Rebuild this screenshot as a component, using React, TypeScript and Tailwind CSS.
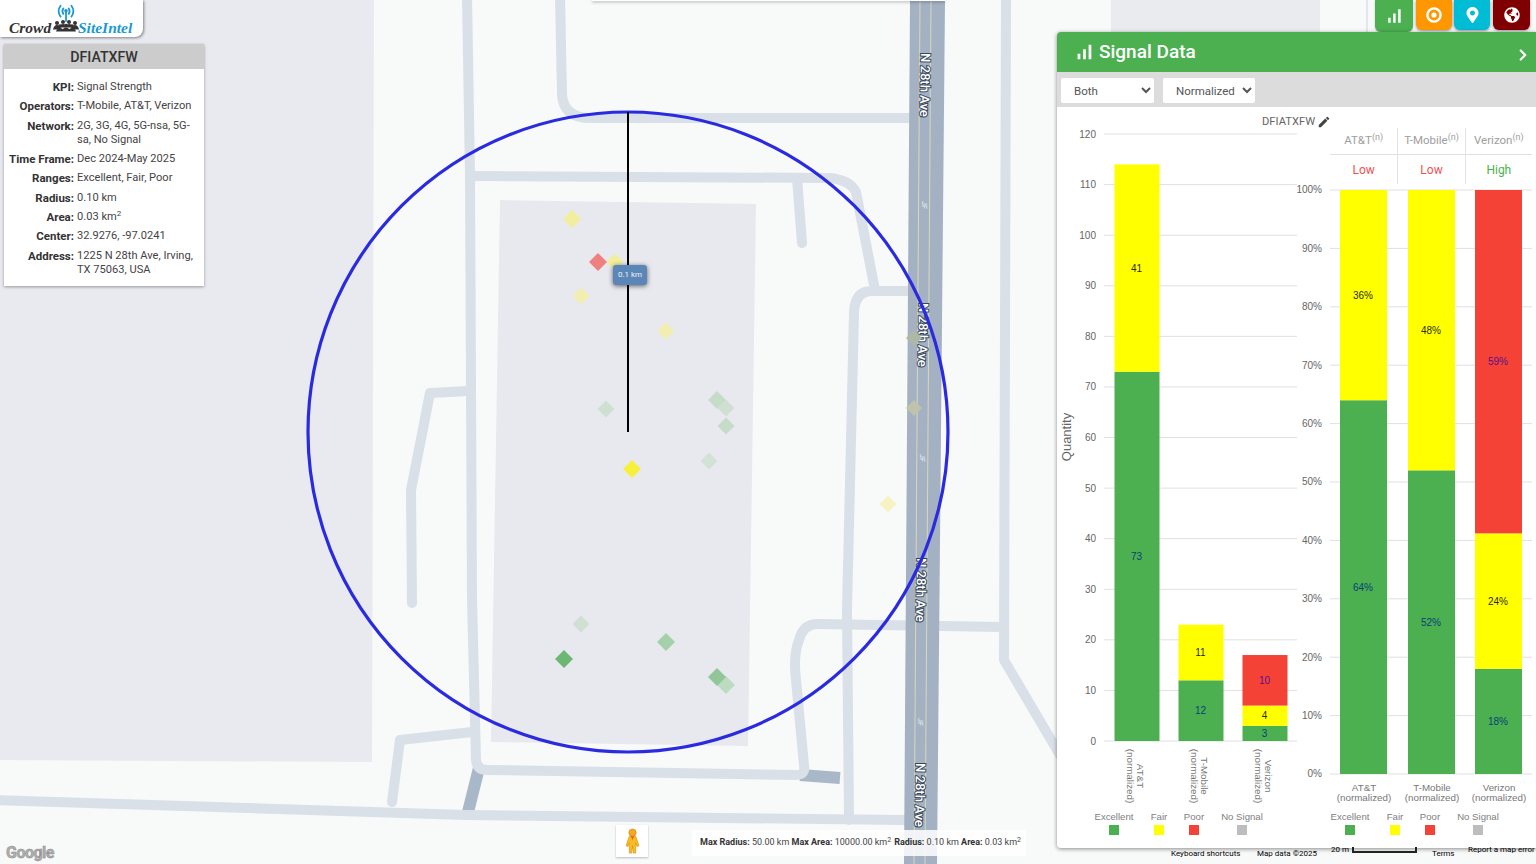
import React from 'react';
import { ChevronRight } from 'lucide-react';
import { FaGlobeAmericas, FaMapMarkerAlt } from 'react-icons/fa';
import { MdEdit, MdSignalCellularAlt } from 'react-icons/md';

const GREEN = '#4caf50';
const YELLOW = '#ffff00';
const RED = '#f44336';

const labelInk: Record<string, string> = {
  [GREEN]: '#0a3f78',
  [YELLOW]: '#2a2a18',
  [RED]: '#5b0f8c',
};

type Seg = { from: number; to: number; color: string; label: string };
type Bar = { x: number; segs: Seg[] };

const countBars: Bar[] = [
  { x: 1114.5, segs: [{ from: 0, to: 73, color: GREEN, label: '73' }, { from: 73, to: 114, color: YELLOW, label: '41' }] },
  { x: 1178.5, segs: [{ from: 0, to: 12, color: GREEN, label: '12' }, { from: 12, to: 23, color: YELLOW, label: '11' }] },
  {
    x: 1242.5,
    segs: [
      { from: 0, to: 3, color: GREEN, label: '3' },
      { from: 3, to: 7, color: YELLOW, label: '4' },
      { from: 7, to: 17, color: RED, label: '10' },
    ],
  },
];

const pctBars: Bar[] = [
  { x: 1340, segs: [{ from: 0, to: 64, color: GREEN, label: '64%' }, { from: 64, to: 100, color: YELLOW, label: '36%' }] },
  { x: 1408, segs: [{ from: 0, to: 52, color: GREEN, label: '52%' }, { from: 52, to: 100, color: YELLOW, label: '48%' }] },
  {
    x: 1475,
    segs: [
      { from: 0, to: 18, color: GREEN, label: '18%' },
      { from: 18, to: 41.2, color: YELLOW, label: '24%' },
      { from: 41.2, to: 100, color: RED, label: '59%' },
    ],
  },
];

const chartFont = { fontFamily: '"Liberation Sans", Arial, sans-serif' };

const Legend = ({ items }: { items: { x: number; name: string; color: string }[] }) => (
  <g>
    {items.map((i) => (
      <g key={i.name}>
        <text x={i.x} y={819.5} textAnchor="middle" fontSize="9.6" fill="#808080">
          {i.name}
        </text>
        <rect x={i.x - 5} y={825} width="10" height="10" fill={i.color} />
      </g>
    ))}
  </g>
);

const CountChart = () => {
  const y = (v: number) => 741 - v * 5.058;
  const ticks = [0, 10, 20, 30, 40, 50, 60, 70, 80, 90, 100, 110, 120];
  const names = ['AT&T', 'T-Mobile', 'Verizon'];
  return (
    <svg viewBox="1057 128 240 720" className="w-[240px] h-[720px] shrink-0 overflow-visible" style={chartFont}>
      <text transform="translate(1071 437) rotate(-90)" textAnchor="middle" fontSize="13" fill="#666">
        Quantity
      </text>
      {ticks.map((t) => (
        <g key={t}>
          <line x1="1104" x2="1297" y1={y(t)} y2={y(t)} stroke="#e0e0e0" strokeWidth="1" />
          <text x="1096" y={y(t) + 3.5} textAnchor="end" fontSize="10" fill="#666">
            {t}
          </text>
        </g>
      ))}
      {countBars.map((b) =>
        b.segs.map((s) => (
          <g key={b.x + s.label}>
            <rect x={b.x} y={y(s.to)} width="45" height={y(s.from) - y(s.to)} fill={s.color} />
            <text x={b.x + 22} y={(y(s.from) + y(s.to)) / 2 + 3.5} textAnchor="middle" fontSize="10" fill={labelInk[s.color]}>
              {s.label}
            </text>
          </g>
        )),
      )}
      {names.map((n, i) => (
        <g key={n} fill="#777" fontSize="9.8">
          <text transform={`translate(${1137 + i * 64} 776) rotate(90)`} textAnchor="middle">
            {n}
          </text>
          <text transform={`translate(${1127 + i * 64} 776) rotate(90)`} textAnchor="middle">
            (normalized)
          </text>
        </g>
      ))}
      <Legend
        items={[
          { x: 1114, name: 'Excellent', color: GREEN },
          { x: 1159, name: 'Fair', color: YELLOW },
          { x: 1194, name: 'Poor', color: RED },
          { x: 1242, name: 'No Signal', color: '#bdbdbd' },
        ]}
      />
    </svg>
  );
};

const PctChart = () => {
  const y = (v: number) => 774 - v * 5.84;
  const ticks = [0, 10, 20, 30, 40, 50, 60, 70, 80, 90, 100];
  const names = [
    { n: 'AT&T', x: 1364 },
    { n: 'T-Mobile', x: 1432 },
    { n: 'Verizon', x: 1499 },
  ];
  return (
    <svg viewBox="1297 184 239 664" className="w-[239px] h-[664px] shrink-0 overflow-visible" style={chartFont}>
      {ticks.map((t) => (
        <g key={t}>
          <line x1="1330" x2="1532" y1={y(t)} y2={y(t)} stroke="#e0e0e0" strokeWidth="1" />
          <text x="1322" y={y(t) + 3.3} textAnchor="end" fontSize="10" fill="#666">
            {t}%
          </text>
        </g>
      ))}
      {pctBars.map((b) =>
        b.segs.map((s) => (
          <g key={b.x + s.label}>
            <rect x={b.x} y={y(s.to)} width="47" height={y(s.from) - y(s.to)} fill={s.color} />
            <text x={b.x + 23} y={(y(s.from) + y(s.to)) / 2 + 3.5} textAnchor="middle" fontSize="10" fill={labelInk[s.color]}>
              {s.label}
            </text>
          </g>
        )),
      )}
      {names.map((l) => (
        <g key={l.n} fill="#777" fontSize="9.8" textAnchor="middle">
          <text x={l.x} y={791}>
            {l.n}
          </text>
          <text x={l.x} y={801}>
            (normalized)
          </text>
        </g>
      ))}
      <Legend
        items={[
          { x: 1350, name: 'Excellent', color: GREEN },
          { x: 1395, name: 'Fair', color: YELLOW },
          { x: 1430, name: 'Poor', color: RED },
          { x: 1478, name: 'No Signal', color: '#bdbdbd' },
        ]}
      />
    </svg>
  );
};

const operators = [
  { name: 'AT&T', level: 'Low', color: 'text-[#ef5350]' },
  { name: 'T-Mobile', level: 'Low', color: 'text-[#ef5350]' },
  { name: 'Verizon', level: 'High', color: 'text-[#4caf50]' },
];

const SignalPanel = () => (
  <div className="absolute left-[1057px] top-[32px] w-[479px] h-[816px] flex flex-col bg-white rounded-l-[4px] overflow-hidden shadow-[0_1px_4px_rgba(0,0,0,0.45)] font-['Roboto',sans-serif]">
    <div className="h-[40px] shrink-0 bg-[#4caf50] text-white flex items-center pl-[16px] pr-[4px]">
      <MdSignalCellularAlt className="w-[22px] h-[22px] -mt-[1px]" />
      <span className="ml-[4px] text-[19px] font-medium mt-[1px]">Signal Data</span>
      <ChevronRight className="ml-auto w-[18px] h-[18px] mt-[5px]" strokeWidth={3} />
    </div>
    <div className="h-[35px] shrink-0 bg-[#dcdcdc] flex items-start pt-[6px] pl-[4px] gap-[9px]">
      <select className="w-[93px] h-[25px] bg-white rounded-[2px] pl-[9px] text-[11.5px] text-[#555]">
        <option>Both</option>
      </select>
      <select className="w-[92px] h-[25px] bg-white rounded-[2px] pl-[9px] text-[11.5px] text-[#555]">
        <option>Normalized</option>
      </select>
    </div>
    <div className="h-[21px] shrink-0 flex items-center pt-[10px] pl-[205px] text-[11.2px] text-[#666]">
      <span>DFIATXFW</span>
      <MdEdit className="w-[14px] h-[14px] ml-[2px] -mt-[2px] text-[#444]" />
    </div>
    <div className="flex-1 flex">
      <CountChart />
      <div className="flex flex-col">
        <div className="ml-[33px] w-[202px] h-[56px] grid grid-cols-3 text-[12px] text-center">
          {operators.map((o, i) => (
            <div key={o.name} className={`flex flex-col ${i > 0 ? 'border-l border-[#e3e3e3]' : ''}`}>
              <div className="h-[27px] flex items-center justify-center text-[11.5px] text-[#9e9e9e] border-b border-[#e0e0e0]">
                <span>
                  {o.name}
                  <sup className="text-[9px] -top-[4px]">(n)</sup>
                </span>
              </div>
              <div className={`h-[29px] flex items-center justify-center ${o.color}`}>{o.level}</div>
            </div>
          ))}
        </div>
        <PctChart />
      </div>
    </div>
  </div>
);

const diamonds = [
  { x: 572, y: 219, c: '#f1ee9c', s: 9 },
  { x: 581, y: 296, c: '#f1eeb0', s: 8.5 },
  { x: 666, y: 331, c: '#f1eeb0', s: 8.5 },
  { x: 615, y: 262, c: '#f1ee9c', s: 8.5 },
  { x: 888, y: 504, c: '#f5f2c4', s: 8.5 },
  { x: 914, y: 408, c: '#bfc3ac', s: 8 },
  { x: 914, y: 338, c: '#adb8a6', s: 8 },
  { x: 598, y: 262, c: '#ee8080', s: 9 },
  { x: 632, y: 469, c: '#f6f03c', s: 9 },
  { x: 606, y: 409, c: '#cfe0d2', s: 8.5 },
  { x: 717, y: 400, c: '#c4dcc8', s: 9 },
  { x: 726, y: 408, c: '#cfe0d2', s: 8.5 },
  { x: 726, y: 426, c: '#c4dcc8', s: 8.5 },
  { x: 709, y: 461, c: '#d2e2d6', s: 8.5 },
  { x: 581, y: 624, c: '#cfe0d2', s: 8.5 },
  { x: 666, y: 642, c: '#a4d0aa', s: 9 },
  { x: 726, y: 685, c: '#bcdcc2', s: 9 },
  { x: 717, y: 677, c: '#90c698', s: 9 },
  { x: 564, y: 659, c: '#6db775', s: 9 },
];

const roadLabels = [
  { x: 925, y: 85, r: 91 },
  { x: 923, y: 335, r: 91 },
  { x: 921, y: 590, r: 91 },
  { x: 920, y: 795, r: 91 },
];

const MapCanvas = () => (
  <svg viewBox="0 0 1536 864" className="absolute inset-0 w-[1536px] h-[864px]">
    <polygon points="0,0 374,0 372,762 0,760" fill="#e8eaf0" />
    <polygon points="1111,0 1320,0 1320,34 1111,34" fill="#e9ebef" />
    <polygon points="500,200 756,204 748,746 491,742" fill="#e8e9ef" />
    <path d="M479 768 L468 812" stroke="#a9b8c8" strokeWidth="12" />
    <path d="M800 775 L840 778" stroke="#a9b8c8" strokeWidth="12" />
    <g fill="none" stroke="#dae0e8" strokeWidth="10" strokeLinejoin="round" strokeLinecap="round">
      <path d="M467 -5 L470 176 L472 600 L476 760 Q477 770 487 770 L796 775 Q806 775 804 765 L796 680 Q793 655 799 640 Q803 624 818 624 L1002 627" />
      <path d="M560 -5 L562 95 Q564 118 590 118 L908 118" />
      <path d="M470 176 L830 178 Q850 180 856 192 L875 290" />
      <path d="M797 178 L802 243" />
      <path d="M908 291 L872 291 Q855 291 854 312 L847 610 L849 820" />
      <path d="M468 391 L430 393 L411 490 L412 603" />
      <path d="M472 732 L400 740 L392 802" />
      <path d="M-5 800 L465 815 L905 820" />
      <path d="M1006 -5 L1004 660 L1060 755" />
    </g>
    <path d="M1367 0 L1367 32" stroke="#dae0e8" strokeWidth="1.5" />
    <polygon points="910,0 945,0 937,864 904,864" fill="#a3b1c3" />
    <path d="M920 0 L914 864 M931 0 L925 864" stroke="#d9d8b8" strokeWidth="1" />
    {roadLabels.map((l) => (
      <text
        key={l.y}
        transform={`translate(${l.x} ${l.y}) rotate(${l.r})`}
        textAnchor="middle"
        dominantBaseline="central"
        fontSize="13"
        fontWeight="500"
        fontFamily="Roboto, sans-serif"
        fill="#ffffff"
        stroke="#35465a"
        strokeWidth="2"
        paintOrder="stroke"
      >
        N 28th Ave
      </text>
    ))}
    {[205, 458, 722].map((v, i) => (
      <text
        key={v}
        transform={`translate(${924 - i * 2} ${v}) rotate(91)`}
        textAnchor="middle"
        dominantBaseline="central"
        fontSize="7"
        fontFamily="Roboto, sans-serif"
        fill="#f0f2f5"
      >
        JF
      </text>
    ))}
    {diamonds.map((d) => (
      <polygon key={`${d.x}-${d.y}`} points={`${d.x},${d.y - d.s} ${d.x + d.s},${d.y} ${d.x},${d.y + d.s} ${d.x - d.s},${d.y}`} fill={d.c} />
    ))}
    <circle cx="628" cy="432" r="320" fill="none" stroke="#2a2ae0" strokeWidth="3.2" />
    <line x1="628" y1="112" x2="628" y2="432" stroke="#000" strokeWidth="2" />
  </svg>
);

const infoRows: [string, React.ReactNode][] = [
  ['KPI:', 'Signal Strength'],
  ['Operators:', 'T-Mobile, AT&T, Verizon'],
  ['Network:', '2G, 3G, 4G, 5G-nsa, 5G-sa, No Signal'],
  ['Time Frame:', 'Dec 2024-May 2025'],
  ['Ranges:', 'Excellent, Fair, Poor'],
  ['Radius:', '0.10 km'],
  [
    'Area:',
    <>
      0.03 km<sup className="text-[8px]">2</sup>
    </>,
  ],
  ['Center:', '32.9276, -97.0241'],
  ['Address:', '1225 N 28th Ave, Irving, TX 75063, USA'],
];

const InfoCard = () => (
  <div className="absolute left-[4px] top-[44px] w-[200px] bg-white shadow-[0_1px_3px_rgba(0,0,0,0.35)] font-['Roboto',sans-serif]">
    <div className="h-[25px] pt-[2px] bg-[#cccccc] flex items-center justify-center text-[14.2px] font-medium text-[#333]">DFIATXFW</div>
    <div className="flex flex-col gap-[5px] pt-[11px] pb-[9px] text-[11.1px] leading-[14.3px] text-[#444]">
      {infoRows.map(([k, v]) => (
        <div key={k} className="flex">
          <div className="w-[70px] shrink-0 text-right text-[11.5px] font-bold text-[#333]">{k}</div>
          <div className="ml-[3px] w-[122px]">{v}</div>
        </div>
      ))}
    </div>
  </div>
);

const Logo = () => (
  <div className="absolute left-0 top-0 w-[143px] h-[37px] bg-white rounded-br-[8px] shadow-[1px_1px_3px_rgba(0,0,0,0.45)]">
    <svg viewBox="0 0 24 20" className="absolute left-[55px] top-[4px] w-[22px] h-[18px]" fill="none" stroke="#1b9ad1" strokeWidth="2" strokeLinecap="round">
      <path d="M6 2 Q1.5 8 6 14" />
      <path d="M18 2 Q22.5 8 18 14" />
      <path d="M9 5 Q7 8 9 11" />
      <path d="M15 5 Q17 8 15 11" />
      <path d="M12 8 L12 19" />
      <circle cx="12" cy="7.5" r="1" fill="#1b9ad1" />
    </svg>
    <svg viewBox="0 0 26 12" className="absolute left-[53px] top-[19px] w-[26px] h-[13px]" fill="#333">
      <circle cx="4" cy="3.5" r="2" />
      <circle cx="10" cy="2.5" r="2" />
      <circle cx="16" cy="2.5" r="2" />
      <circle cx="22" cy="3.5" r="2" />
      <path d="M0 10 Q1 5.5 4 5.5 Q7 5.5 8 10Z M6 8 Q7 4.5 10 4.5 Q13 4.5 13 8Z M13 8 Q13 4.5 16 4.5 Q19 4.5 20 8Z M18 10 Q19 5.5 22 5.5 Q25 5.5 26 10Z" />
      <circle cx="7" cy="6.5" r="1.8" />
      <circle cx="13" cy="6" r="1.8" />
      <circle cx="19" cy="6.5" r="1.8" />
      <path d="M3 12 Q4 8.5 7 8.5 Q10 8.5 11 12Z M9 12 Q10 8 13 8 Q16 8 17 12Z M15 12 Q16 8.5 19 8.5 Q22 8.5 23 12Z" />
    </svg>
    <span className="absolute left-[9px] top-[19px] text-[15.5px] leading-[18px] font-bold italic text-[#333] font-['Liberation_Serif',serif]">Crowd</span>
    <span className="absolute left-[78px] top-[19px] text-[15.5px] leading-[18px] font-bold italic text-[#1b9ad1] font-['Liberation_Serif',serif]">SiteIntel</span>
  </div>
);

const topButtons = [
  {
    bg: 'bg-[#ff9800]',
    w: 'w-[36px]',
    icon: (
      <svg viewBox="0 0 16 16" className="w-[16px] h-[16px]" fill="none">
        <circle cx="8" cy="8" r="6.6" stroke="white" strokeWidth="2.4" />
        <circle cx="8" cy="8" r="2.6" fill="white" />
      </svg>
    ),
  },
  { bg: 'bg-[#00bcd4]', w: 'w-[36px]', icon: <FaMapMarkerAlt className="w-[15px] h-[16px]" /> },
  { bg: 'bg-[#7f0000]', w: 'w-[37px]', icon: <FaGlobeAmericas className="w-[16px] h-[16px]" /> },
];

const TopButtons = () => (
  <div className="absolute left-[1375px] top-0 flex items-start">
    <div className="w-[38px] h-[32px] bg-[#4caf50] rounded-b-[6px] flex items-center justify-center text-white shadow-[0_1px_2px_rgba(0,0,0,0.25)]">
      <MdSignalCellularAlt className="w-[20px] h-[20px]" />
    </div>
    <div className="flex ml-[3px] gap-[2px]">
      {topButtons.map((b, i) => (
        <div key={i} className={`${b.w} h-[30px] ${b.bg} ${i === 2 ? 'ml-[1px]' : ''} rounded-b-[6px] flex items-center justify-center text-white shadow-[0_1px_3px_rgba(0,0,0,0.4)]`}>
          {b.icon}
        </div>
      ))}
    </div>
  </div>
);

const Pegman = () => (
  <div className="absolute left-[616px] top-[825px] w-[32px] h-[32px] bg-white shadow-[0_1px_2px_rgba(0,0,0,0.25)] flex items-center justify-center">
    <svg viewBox="0 0 16 28" className="w-[15px] h-[26px]">
      <circle cx="8" cy="5" r="4" fill="#f5a623" stroke="#c98a12" strokeWidth="0.6" />
      <path d="M4.5 9 L11.5 9 L15 19 L12.8 20 L11.5 16 L11.5 27 L8.8 27 L8 19 L7.2 27 L4.5 27 L4.5 16 L3.2 20 L1 19 Z" fill="#fbbc22" stroke="#c98a12" strokeWidth="0.6" />
      <path d="M6 9 L8 13 L10 9 Z" fill="#e8641e" />
    </svg>
  </div>
);

const MaxBox = () => (
  <div className="absolute left-[692px] top-[830px] w-[334px] h-[26px] bg-white/85 flex items-center pl-[8px] text-[9px] text-[#444] whitespace-pre font-['Roboto',sans-serif]">
    <b className="font-bold text-[#333]">Max Radius:</b> 50.00 km <b className="font-bold text-[#333]">Max Area:</b> 10000.00 km<sup className="text-[7px]">2</sup>
    <b className="font-bold text-[#333] ml-[3px]">Radius:</b> 0.10 km <b className="font-bold text-[#333]">Area:</b> 0.03 km<sup className="text-[7px]">2</sup>
  </div>
);

const App = () => (
  <div className="relative w-[1536px] h-[864px] overflow-hidden bg-[#f8f9f9]">
    <MapCanvas />
    <div className="absolute left-[592px] top-0 w-[353px] h-[1px] bg-white shadow-[0_1px_3px_rgba(0,0,0,0.5)]" />
    <div className="absolute left-[613px] top-[265px] w-[34px] h-[20px] rounded-[3px] bg-[#5a86b8] shadow-[0_1px_5px_rgba(0,0,0,0.6)] flex items-center justify-center text-[8px] text-white/90 font-['Roboto',sans-serif]">
      0.1 km
    </div>
    <Logo />
    <InfoCard />
    <TopButtons />
    <SignalPanel />
    <Pegman />
    <MaxBox />
    <span className="absolute left-[6px] top-[843px] text-[16px] leading-[20px] font-bold tracking-[-0.5px] text-[#b0b0b0] font-['Roboto',sans-serif] [-webkit-text-stroke:0.5px_#8a8a8a]">
      Google
    </span>
    <div className="absolute left-0 top-0 w-0 h-0 text-[8px] leading-[10px] text-black whitespace-nowrap font-['Roboto',sans-serif]">
      <span className="absolute left-[1171px] top-[849px]">Keyboard shortcuts</span>
      <span className="absolute left-[1257px] top-[849px]">Map data ©2025</span>
      <span className="absolute left-[1331px] top-[845px]">20 m</span>
      <span className="absolute left-[1352px] top-[847px] w-[65px] h-[6px] border-x-2 border-b-2 border-[#222]" />
      <span className="absolute left-[1432px] top-[849px]">Terms</span>
      <span className="absolute left-[1468px] top-[845px]">Report a map error</span>
    </div>
  </div>
);

export default App;
